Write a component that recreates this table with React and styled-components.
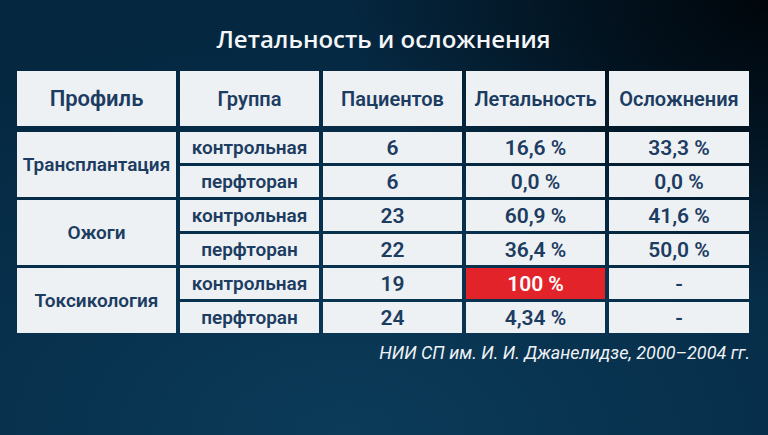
import React from "react";
import styled, { createGlobalStyle } from "styled-components";

const Global = createGlobalStyle`
  html, body { margin: 0; padding: 0; }
  body { width: 768px; height: 435px; overflow: hidden; }
`;

const Page = styled.div`
  width: 768px;
  height: 435px;
  box-sizing: border-box;
  padding: 24px 18px 0 17px;
  display: flex;
  flex-direction: column;
  font-family: Roboto, "Noto Sans", sans-serif;
  background:
    radial-gradient(ellipse 420px 300px at 100% 0%, rgba(0, 4, 8, 0.95) 0%, rgba(0, 4, 8, 0.55) 45%, rgba(0, 4, 8, 0) 100%),
    radial-gradient(ellipse 700px 420px at 45% 100%, #0b3b59 0%, #07304c 55%, #052740 100%);
`;

const Title = styled.h1`
  margin: 0 0 17px;
  text-align: center;
  color: #f4f6f8;
  font-family: "Open Sans", Roboto, sans-serif;
  font-size: 24px;
  line-height: 30px;
  font-weight: 600;
`;

const Grid = styled.div`
  display: grid;
  grid-template-columns: 159px 139px 139px 139px 140px;
  grid-template-rows: 58px repeat(6, 31px);
  column-gap: 4px;
  row-gap: 3px;
`;

const Cell = styled.div`
  display: flex;
  align-items: center;
  justify-content: center;
  background: ${(p) => (p.$alert ? "#e3232a" : "#eef1f4")};
  color: ${(p) => (p.$alert ? "#ffffff" : "#1c3c62")};
  font-size: ${(p) => p.$size || 19}px;
  font-weight: 600;
  white-space: nowrap;
  grid-row: ${(p) => (p.$rowSpan ? `span ${p.$rowSpan}` : "auto")};
`;

const HeadCell = styled(Cell)`
  margin-bottom: 3px;
  font-size: ${(p) => p.$size || 20}px;
`;

const Source = styled.div`
  margin-top: 9px;
  text-align: right;
  color: #eef2f6;
  font-size: 18px;
  font-style: italic;
  font-weight: 400;
`;

const groups = [
  {
    name: "Трансплантация",
    rows: [
      ["контрольная", "6", "16,6 %", "33,3 %"],
      ["перфторан", "6", "0,0 %", "0,0 %"],
    ],
  },
  {
    name: "Ожоги",
    rows: [
      ["контрольная", "23", "60,9 %", "41,6 %"],
      ["перфторан", "22", "36,4 %", "50,0 %"],
    ],
  },
  {
    name: "Токсикология",
    rows: [
      ["контрольная", "19", "100 %", "-", true],
      ["перфторан", "24", "4,34 %", "-"],
    ],
  },
];

export default function App() {
  return (
    <Page>
      <Global />
      <Title>Летальность и осложнения</Title>
      <Grid>
        <HeadCell $size={22}>Профиль</HeadCell>
        <HeadCell>Группа</HeadCell>
        <HeadCell>Пациентов</HeadCell>
        <HeadCell>Летальность</HeadCell>
        <HeadCell>Осложнения</HeadCell>
        {groups.map((g) =>
          g.rows.map((r, i) => (
            <React.Fragment key={g.name + i}>
              {i === 0 && <Cell $rowSpan={2}>{g.name}</Cell>}
              <Cell>{r[0]}</Cell>
              <Cell $size={21}>{r[1]}</Cell>
              <Cell $size={21} $alert={r[4]}>{r[2]}</Cell>
              <Cell $size={21}>{r[3]}</Cell>
            </React.Fragment>
          ))
        )}
      </Grid>
      <Source>НИИ СП им. И. И. Джанелидзе, 2000–2004 гг.</Source>
    </Page>
  );
}
